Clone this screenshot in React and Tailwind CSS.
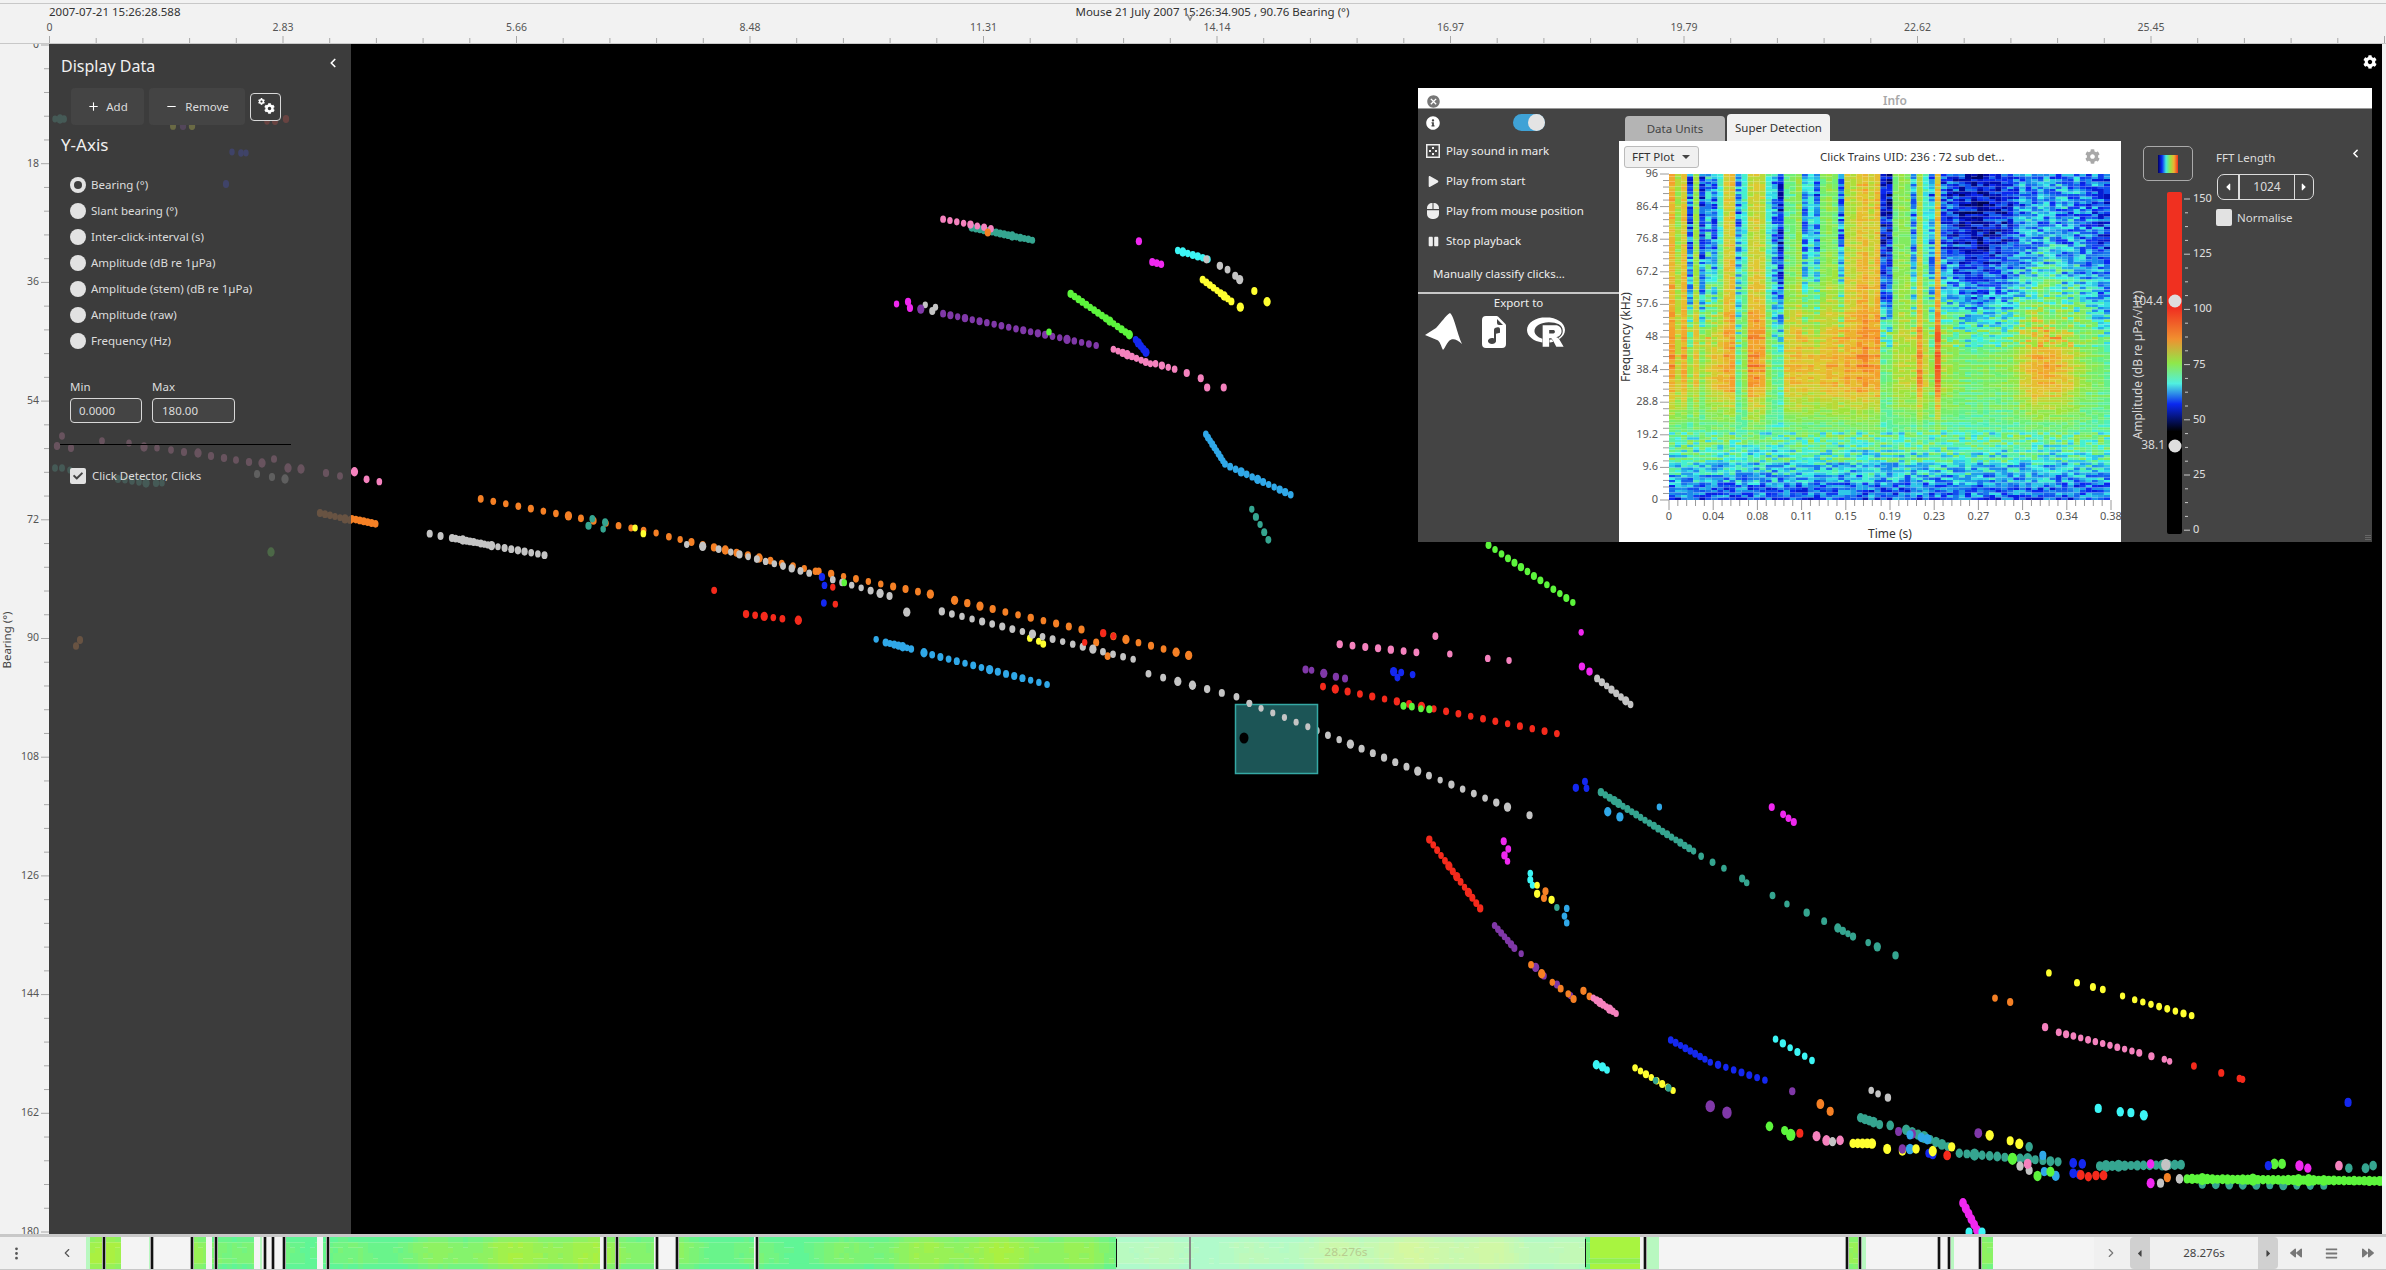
import { useMemo } from "react";
import { ChevronLeft, ChevronRight, Minus, Plus } from "lucide-react";
import { BsFileEarmarkMusicFill, BsThreeDotsVertical } from "react-icons/bs";
import { FaBackward, FaBars, FaCaretLeft, FaCaretRight, FaCheck, FaCog, FaForward, FaInfoCircle, FaPause, FaPlay } from "react-icons/fa";
import { MdCancel } from "react-icons/md";
import { SiR } from "react-icons/si";

const PINK = "#f582be";
const TEAL = "#35a590";
const ORANGE = "#f58025";
const MAGENTA = "#f028f0";
const CYAN = "#3cf5f5";
const GRAY = "#c4c4c4";
const YELLOW = "#ffff30";
const GREEN = "#5cf53c";
const PURPLE = "#8038a8";
const BLUE = "#1428f0";
const SKY = "#30a8e8";
const RED = "#f52a1c";

function rng(seed) {
    let s = seed;
    return () => {
        s = (s + 0x6d2b79f5) | 0;
        let t = Math.imul(s ^ (s >>> 15), 1 | s);
        t = (t + Math.imul(t ^ (t >>> 7), 61 | t)) ^ t;
        return ((t ^ (t >>> 14)) >>> 0) / 4294967296;
    };
}

// measured off two crops of the plot
const a = (x, y) => [350 + x / 1.568, 200 + y / 2.613];
const b = (x, y) => [1200 + x / 1.317, 540 + y / 2.34];
const line = (p, q, n) => Array.from({ length: n }, (_, i) => [p[0] + ((q[0] - p[0]) * i) / Math.max(n - 1, 1), p[1] + ((q[1] - p[1]) * i) / Math.max(n - 1, 1)]);

const tracks = [
    // behind the display data panel
    [TEAL, [[55, 119], [60, 119], [64, 119], [55, 468], [62, 468], [70, 470], [118, 479], [125, 480], [132, 481], [139, 482], [146, 483], [156, 483], [162, 483]]],
    [RED, [[267, 121], [275, 121], [286, 119]]],
    [YELLOW, [[173, 126], [192, 126]]],
    [PURPLE, [[183, 126]]],
    [BLUE, [[232, 152], [241, 153], [246, 153], [226, 184]]],
    [PINK, [[62, 436], [57, 446], [71, 448], [102, 441], [129, 443], [144, 447], [157, 448], [171, 450], [184, 452], [198, 453], [211, 456], [224, 458], [236, 460], [249, 462], [262, 463], [274, 459], [288, 468], [301, 469], [326, 473], [340, 476]]],
    [GRAY, [[257, 474], [272, 477], [285, 479]]],
    [ORANGE, [...line([320, 513], [350, 520], 7), [76, 646], [80, 640]]],
    [GREEN, [[271, 552]]],
    // upper tracks
    [TEAL, line(a(975, 72), a(1070, 105), 16)],
    [PINK, line(a(930, 50), a(1005, 75), 8)],
    [ORANGE, [a(1000, 85)]],
    [MAGENTA, [a(1237, 108), a(1258, 162), a(1265, 165), a(1272, 168), a(857, 272), a(875, 266), a(878, 282)]],
    [CYAN, line(a(1298, 132), a(1345, 155), 7)],
    [GRAY, [a(1343, 155), a(1364, 172), a(1376, 182), a(1388, 198), a(1395, 208)]],
    [YELLOW, [...line(a(1337, 208), a(1382, 265), 9), a(1396, 280), a(1418, 238), a(1438, 266)]],
    [GREEN, line(a(1130, 245), a(1222, 352), 16)],
    [BLUE, line(a(1232, 365), a(1248, 398), 5)],
    [GRAY, [a(902, 274), a(913, 290), a(918, 280)]],
    [PURPLE, [a(895, 285), ...line(a(930, 297), a(1170, 380), 22)]],
    [GREEN, [a(1096, 345)]],
    [PINK, [...line(a(1197, 390), a(1255, 428), 9), ...line(a(1263, 428), a(1293, 442), 4), a(1312, 452), a(1334, 466), a(1344, 490), a(1370, 490)]],
    [SKY, [...line(a(1342, 612), a(1372, 690), 10), ...line(a(1380, 697), a(1475, 770), 12)]],
    [TEAL, line(a(1414, 808), a(1440, 888), 5)],
    // the long diagonal
    [PINK, [a(7, 710), a(26, 730), a(46, 736)]],
    [ORANGE, line(a(3, 833), a(40, 846), 7)],
    [GRAY, [a(125, 872), a(142, 878), ...line(a(160, 883), a(222, 903), 12), ...line(a(232, 906), a(305, 928), 8)]],
    [ORANGE, [...line(a(205, 781), a(480, 870), 15), ...line(a(500, 880), a(730, 970), 14), ...line(a(735, 970), a(910, 1030), 10), ...line(a(948, 1046), a(1147, 1122), 11), ...line(a(1197, 1140), a(1315, 1190), 7), a(1170, 1156), a(1188, 1192)]],
    [TEAL, [a(380, 833), a(400, 842), a(374, 851), a(397, 860)]],
    [YELLOW, [a(447, 857), a(460, 872), a(1066, 1145), a(1080, 1153), a(1087, 1160)]],
    [GRAY, [a(528, 900), a(553, 905), a(578, 912), ...line(a(597, 920), a(720, 975), 10), ...line(a(757, 992), a(846, 1035), 7), a(873, 1077), ...line(a(928, 1075), a(1228, 1200), 20), ...line(a(1252, 1238), a(1390, 1298), 7)]],
    [BLUE, [a(740, 985), a(744, 1007), a(743, 1053)]],
    [RED, [a(757, 1012), a(761, 1056), a(571, 1020), ...line(a(621, 1082), a(678, 1094), 5), a(703, 1098), a(1152, 1156), a(1181, 1132), a(1197, 1140)]],
    [GREEN, [a(775, 1000)]],
    [SKY, [a(825, 1148), ...line(a(840, 1156), a(880, 1173), 7), ...line(a(900, 1183), a(1093, 1266), 16)]],
    // right hand side
    [GRAY, [...line(b(65, 383), b(405, 625), 24), b(434, 644)]],
    [GREEN, line(b(380, 12), b(491, 146), 14)],
    [PINK, [...line(b(184, 244), b(285, 263), 7), b(310, 225), b(329, 267), b(379, 277), b(407, 282)]],
    [MAGENTA, [b(502, 216), b(503, 296), b(513, 308)]],
    [GRAY, line(b(523, 324), b(567, 385), 8)],
    [PURPLE, [b(139, 303), b(147, 305), b(163, 312), b(179, 320), b(191, 324)]],
    [BLUE, [b(255, 308), b(265, 310), b(260, 322), b(280, 315), b(495, 580), b(507, 565), b(509, 581)]],
    [RED, line(b(162, 343), b(470, 453), 20)],
    [GREEN, [b(268, 388), b(279, 390), b(291, 395), b(302, 396)]],
    [TEAL, [...line(b(528, 590), b(650, 728), 22), ...line(b(660, 740), b(690, 768), 3), b(714, 792), b(720, 802), b(754, 832), b(773, 852), b(799, 872), b(822, 892), ...line(b(840, 908), b(860, 928), 4), b(880, 942), b(892, 952), b(916, 972)]],
    [SKY, [b(537, 636), b(553, 648), b(605, 625)]],
    [MAGENTA, [b(753, 625), b(768, 642), b(775, 651), b(782, 660), b(400, 705), b(406, 723), b(401, 738), b(405, 752)]],
    [RED, line(b(302, 701), b(369, 862), 14)],
    [CYAN, [b(435, 780), b(435, 795), b(438, 808)]],
    [YELLOW, [b(444, 808), b(444, 828), b(463, 842)]],
    [ORANGE, [b(455, 822), b(453, 838)]],
    [TEAL, [b(470, 860)]],
    [SKY, [b(483, 862), b(480, 880), b(483, 896)]],
    [PURPLE, [...line(b(388, 902), b(414, 955), 7), b(423, 968), b(442, 1000), b(453, 1020), b(470, 1040), b(488, 1066)]],
    [ORANGE, [b(436, 994), b(450, 1015), b(464, 1035), b(475, 1050), b(485, 1062), b(492, 1074), b(505, 1055), b(513, 1068)]],
    [PINK, line(b(518, 1072), b(548, 1108), 8)],
    [YELLOW, [b(1118, 1013), b(1155, 1036), b(1176, 1046), b(1189, 1052), b(1215, 1067), ...line(b(1231, 1076), b(1306, 1113), 8)]],
    [ORANGE, [b(1047, 1072), b(1067, 1081)]],
    [PINK, [b(1113, 1140), ...line(b(1131, 1152), b(1237, 1200), 12), b(1253, 1208), b(1270, 1215), b(1277, 1220)]],
    [RED, [b(1309, 1231), b(1345, 1247), b(1369, 1260), b(1373, 1262)]],
    [BLUE, [...line(b(620, 1170), b(665, 1215), 8), ...line(b(672, 1222), b(744, 1264), 8)]],
    [CYAN, [...line(b(758, 1168), b(806, 1218), 6), b(522, 1228), b(530, 1233), b(536, 1240)]],
    [YELLOW, line(b(573, 1235), b(623, 1288), 8)],
    [TEAL, [b(600, 1265), b(617, 1282)]],
    [PURPLE, [b(780, 1290), b(672, 1325), b(694, 1340)]],
    [GRAY, [b(884, 1288), b(893, 1296), b(906, 1305)]],
    [ORANGE, [b(817, 1320), b(830, 1337)]],
    [TEAL, [...line(b(870, 1352), b(887, 1362), 4), b(895, 1368), b(909, 1370), ...line(b(930, 1380), b(985, 1420), 8)]],
    [CYAN, [b(1183, 1330), b(1212, 1338), b(1226, 1340), b(1243, 1346)]],
    [BLUE, [b(1512, 1316)]],
    [GREEN, [b(750, 1372), b(770, 1382), b(778, 1392)]],
    [RED, [b(790, 1388)]],
    [PINK, [b(812, 1395), b(825, 1405), b(843, 1405)]],
    [GRAY, [b(833, 1408)]],
    [YELLOW, [...line(b(860, 1412), b(885, 1412), 5), b(905, 1425), b(925, 1430)]],
    [PURPLE, [b(920, 1384), b(938, 1390), b(925, 1425), b(1025, 1388)]],
    [SKY, [b(935, 1392), b(950, 1398), b(958, 1402), b(935, 1425)]],
    [BLUE, [b(960, 1435), b(965, 1438)]],
    [RED, [b(984, 1440)]],
    [YELLOW, [b(943, 1425), b(965, 1430), b(990, 1420), b(1040, 1393), b(1067, 1406), b(1079, 1413)]],
    [TEAL, [...line(b(1000, 1435), b(1130, 1455), 14), ...line(b(1185, 1465), b(1292, 1462), 14), b(1092, 1420)]],
    [BLUE, [b(1150, 1458), b(1162, 1460), b(1150, 1482), b(1158, 1485)]],
    [RED, [b(1160, 1486), b(1170, 1490), b(1180, 1487), b(1190, 1487)]],
    [SKY, [b(1110, 1440), b(1112, 1478), b(1127, 1488)]],
    [GREEN, [b(1103, 1488), b(1120, 1478), b(1070, 1448)]],
    [GRAY, [b(1080, 1465), b(1092, 1475), b(1272, 1462), b(1265, 1505), b(1290, 1495)]],
    [PINK, [b(1090, 1460), b(1500, 1464)]],
    [MAGENTA, [b(1252, 1505), b(1252, 1460), b(1448, 1464), b(1459, 1470), ...line([1963, 1203], [1977, 1230], 6)]],
    [ORANGE, [b(1274, 1492)]],
    [TEAL, [...line(b(1320, 1507), b(1480, 1510), 10), b(1535, 1470), b(1545, 1464), b(1513, 1470)]],
    [GREEN, [...line(b(1300, 1495), b(1560, 1500), 40), b(1415, 1460), b(1425, 1460)]],
    [BLUE, [b(1407, 1464)]],
    [CYAN, [[1969, 1232], [1982, 1232]]],
];

function ClickPlot() {
    const dots = useMemo(() => {
        const rand = rng(7);
        const out = [];
        tracks.forEach(([fill, pts]) => {
            pts.forEach(([x, y]) => {
                let k = rand() > 0.9 ? 1.3 : 0.95 + rand() * 0.2;
                if (y > 1100 && x > 1400) k *= 1.3;
                out.push({ x, y, fill, k });
            });
        });
        return out;
    }, []);

    return (
        <svg className="absolute inset-0 w-full h-full" viewBox="49 44 2333 1190">
            {dots.map((d, i) => (
                <ellipse key={i} cx={d.x} cy={d.y} rx={2.8 * d.k} ry={3.6 * d.k} fill={d.fill} />
            ))}
            <rect x="1235.5" y="704.5" width="82" height="69" fill="#1c5556" stroke="#35a8a4" strokeWidth="1.5" />
            {line(b(65, 383), b(142, 437), 6).map(([x, y], i) => (
                <ellipse key={i} cx={x} cy={y} rx="2.6" ry="3.4" fill={GRAY} />
            ))}
            <ellipse cx="1244" cy="738" rx="4.5" ry="5.5" fill="#000" />
        </svg>
    );
}

const JET = [
    [0, [0, 0, 40]],
    [0.12, [0, 10, 170]],
    [0.22, [10, 40, 240]],
    [0.33, [30, 150, 235]],
    [0.42, [60, 240, 230]],
    [0.52, [110, 240, 120]],
    [0.62, [160, 228, 60]],
    [0.72, [225, 200, 50]],
    [0.8, [245, 160, 45]],
    [0.9, [240, 90, 35]],
    [1, [240, 40, 25]],
];

function jet(v) {
    const t = Math.min(1, Math.max(0, v));
    for (let i = 1; i < JET.length; i++) {
        if (t <= JET[i][0]) {
            const f = (t - JET[i - 1][0]) / (JET[i][0] - JET[i - 1][0]);
            const c = JET[i - 1][1].map((n, j) => Math.round(n + (JET[i][1][j] - n) * f));
            return `rgb(${c.join(",")})`;
        }
    }
    return "rgb(240,40,25)";
}

const TOPS = [0.76, 0.62, 0.72, 0.26, 0.6, 0.22, 0.36, 0.28, 0.44, 0.7, 0.72, 0.34, 0.44, 0.66, 0.7, 0.66, 0.44, 0.32, 0.2, 0.5, 0.52, 0.6, 0.32, 0.4, 0.32, 0.52, 0.58, 0.54, 0.28, 0.66, 0.64, 0.72, 0.74, 0.68, 0.74, 0.16, 0.16, 0.54, 0.58, 0.56, 0.32, 0.64, 0.44, 0.32, 0.72, 0.26, 0.24, 0.2, 0.18, 0.16, 0.17, 0.16, 0.16, 0.17, 0.18, 0.2, 0.24, 0.28, 0.3, 0.32, 0.34, 0.34, 0.34, 0.32, 0.32, 0.3, 0.32, 0.32, 0.3, 0.28, 0.28, 0.26, 0.24];
const MIDS = [0.8, 0.68, 0.78, 0.6, 0.72, 0.6, 0.68, 0.73, 0.75, 0.77, 0.8, 0.5, 0.6, 0.82, 0.82, 0.79, 0.6, 0.5, 0.46, 0.72, 0.74, 0.75, 0.74, 0.74, 0.72, 0.74, 0.76, 0.76, 0.74, 0.78, 0.78, 0.8, 0.82, 0.78, 0.8, 0.52, 0.55, 0.64, 0.66, 0.66, 0.64, 0.82, 0.68, 0.6, 0.9, 0.64, 0.6, 0.58, 0.55, 0.53, 0.53, 0.55, 0.55, 0.55, 0.56, 0.56, 0.58, 0.62, 0.68, 0.73, 0.77, 0.78, 0.78, 0.77, 0.75, 0.73, 0.7, 0.64, 0.6, 0.57, 0.55, 0.53, 0.51];

function Spectrogram({ x, y, w, h }) {
    const cells = useMemo(() => {
        const rand = rng(41);
        const cols = TOPS.length;
        const rows = 130;
        const cw = w / cols;
        const ch = h / rows;
        const rowNoise = Array.from({ length: rows }, () => rand() - 0.5);
        const bins = {};
        for (let c = 0; c < cols; c++) {
            for (let r = 0; r < rows; r++) {
                const f = ((rows - r - 0.5) / rows) * 96;
                let v;
                if (f >= 38) {
                    v = TOPS[c] + (MIDS[c] - TOPS[c]) * Math.exp(-(((f - 38) / 24) ** 2));
                } else if (f > 14) {
                    const s = (38 - f) / 24;
                    v = MIDS[c] + (0.47 - MIDS[c]) * s * s * (3 - 2 * s);
                } else {
                    v = 0.47 - ((14 - f) / 14) * 0.22;
                }
                const loud = f > 45 && TOPS[c] < 0.4 ? 0.24 : f < 20 ? 0.22 : 0.08;
                v += rowNoise[r] * 0.06 + (rand() - 0.5) * loud;
                const key = jet(Math.round(v * 50) / 50);
                bins[key] = (bins[key] || "") + `M${(x + c * cw).toFixed(1)} ${(y + r * ch).toFixed(1)}h${cw.toFixed(1)}v${ch.toFixed(1)}h-${cw.toFixed(1)}z`;
            }
        }
        return Object.entries(bins);
    }, [x, y, w, h]);

    return (
        <g>
            {cells.map(([fill, d]) => (
                <path key={fill} d={d} fill={fill} />
            ))}
        </g>
    );
}

function FftPlot() {
    const yLabels = ["96", "86.4", "76.8", "67.2", "57.6", "48", "38.4", "28.8", "19.2", "9.6", "0"];
    const xLabels = ["0", "0.04", "0.08", "0.11", "0.15", "0.19", "0.23", "0.27", "0.3", "0.34", "0.38"];
    const ticks = [];
    for (let i = 0; i <= 50; i++) {
        const major = i % 5 === 0;
        const yy = 174 + i * 6.52;
        ticks.push(<line key={"y" + i} x1={major ? 1660 : 1663} x2="1669" y1={yy} y2={yy} stroke="#9a9a9a" />);
        const xx = 1669 + i * 8.84;
        ticks.push(<line key={"x" + i} x1={xx} x2={xx} y1="500" y2={major ? 510 : 506} stroke="#9a9a9a" />);
    }
    return (
        <svg className="w-[502px] h-[374px] block" viewBox="1619 168 502 374">
            <Spectrogram x={1669} y={174} w={441} h={326} />
            {ticks}
            <g fill="#555" fontSize="11">
                {yLabels.map((t, i) => (
                    <text key={t} x="1658" y={174 + i * 32.6} textAnchor="end" dominantBaseline="middle">{t}</text>
                ))}
                {xLabels.map((t, i) => (
                    <text key={t} x={1669 + i * 44.2} y="517" textAnchor="middle" dominantBaseline="middle">{t}</text>
                ))}
            </g>
            <g fill="#333" fontSize="12">
                <text x="1890" y="535" textAnchor="middle" dominantBaseline="middle">Time (s)</text>
                <text x="0" y="0" textAnchor="middle" dominantBaseline="middle" transform="translate(1627 337) rotate(-90)">Frequency (kHz)</text>
            </g>
        </svg>
    );
}

function ColourBar() {
    const ticks = [];
    for (let i = 0; i <= 24; i++) {
        const yy = 199 + i * 13.8;
        const major = i % 4 === 0;
        ticks.push(<line key={i} x1={major ? 2184 : 2185} x2={major ? 2190 : 2188} y1={yy} y2={yy} stroke="#c8c8c8" />);
    }
    return (
        <svg className="w-[95px] h-[357px] block" viewBox="2121 185 95 357">
            <defs>
                <linearGradient id="bar" x1="0" y1="0" x2="0" y2="1">
                    <stop offset="0.34" stopColor="#f03020" />
                    <stop offset="0.43" stopColor="#f09030" />
                    <stop offset="0.5" stopColor="#8fe84a" />
                    <stop offset="0.56" stopColor="#50f0e0" />
                    <stop offset="0.62" stopColor="#0a28f0" />
                    <stop offset="0.7" stopColor="#000" />
                </linearGradient>
            </defs>
            <rect x="2167" y="192" width="15" height="342" rx="2" fill="url(#bar)" />
            {ticks}
            <g fill="#e0e0e0" fontSize="11">
                {["150", "125", "100", "75", "50", "25", "0"].map((t, i) => (
                    <text key={t} x="2193" y={199 + i * 55.2} dominantBaseline="middle">{t}</text>
                ))}
            </g>
            <g fill="#d8d8d8" fontSize="12">
                <text x="2163" y="302" textAnchor="end" dominantBaseline="middle">104.4</text>
                <text x="2165" y="446" textAnchor="end" dominantBaseline="middle">38.1</text>
                <text x="0" y="0" textAnchor="middle" dominantBaseline="middle" transform="translate(2139 365) rotate(-90)">Amplitude (dB re µPa/√Hz)</text>
            </g>
            <circle cx="2175" cy="301" r="6.5" fill="#dedede" />
            <circle cx="2175" cy="446" r="6.5" fill="#dedede" />
        </svg>
    );
}

function TopAxis() {
    const labels = ["0", "2.83", "5.66", "8.48", "11.31", "14.14", "16.97", "19.79", "22.62", "25.45"];
    const ticks = [];
    for (let i = 0; i <= 50; i++) {
        const xx = 49.5 + i * 46.7;
        ticks.push(<line key={i} x1={xx} x2={xx} y1={i % 5 === 0 ? 36 : 38} y2="44" stroke="#a8a8a8" />);
    }
    return (
        <svg className="w-full h-[24px] block" viewBox="0 20 2386 24">
            {ticks}
            {labels.map((t, i) => (
                <text key={t} x={49.5 + i * 233.5} y="28" textAnchor="middle" dominantBaseline="middle" fill="#555" fontSize="10.5">{t}</text>
            ))}
        </svg>
    );
}

function LeftAxis() {
    const ticks = [];
    for (let i = 0; i <= 50; i++) {
        const yy = 45 + i * 23.74;
        const major = i % 5 === 0;
        ticks.push(<line key={i} x1={major ? 41 : 44} x2="49" y1={yy} y2={yy} stroke="#a8a8a8" />);
        if (major) {
            ticks.push(<text key={"t" + i} x="39" y={yy} textAnchor="end" dominantBaseline="middle" fill="#555" fontSize="10.5">{i * 3.6}</text>);
        }
    }
    return (
        <svg className="w-[49px] h-[1190px] block shrink-0" viewBox="0 44 49 1190">
            {ticks}
            <text x="0" y="0" textAnchor="middle" dominantBaseline="middle" fill="#444" fontSize="11.5" transform="translate(8 640) rotate(-90)">Bearing (°)</text>
        </svg>
    );
}

const STRIP = [
    [86, 90, "p"], [90, 121, "g"], [149, 152, "p"], [153, 154, "p"], [193, 206, "g"], [212, 254, "g"], [260, 262, "p"], [285, 317, "g"], [323, 600, "g"],
    [606, 654, "g"], [679, 754, "g"], [759, 1590, "g"], [1590, 1640, "b"], [1646, 1659, "p"], [1848, 1858, "g"], [1862, 1866, "p"], [1950, 1954, "p"], [1982, 1993, "g"],
];
const STRIP_LINES = [103, 151, 191, 215, 264, 272, 283, 327, 604, 616, 656, 676, 756, 1644, 1846, 1859, 1938, 1948, 1979];

function Overview() {
    const cells = useMemo(() => {
        const rand = rng(13);
        const bins = {};
        const w = 5;
        const h = 6;
        STRIP.forEach(([x0, x1, kind]) => {
            for (let x = x0; x < x1; x += w) {
                const wave = 0.5 + 0.35 * Math.sin(x / 70) + 0.15 * Math.sin(x / 13);
                for (let r = 0; r < 6; r++) {
                    const edge = r === 0 || r === 5 ? -0.25 : 0;
                    let v = wave + edge + (rand() - 0.5) * 0.12;
                    v = Math.max(0, Math.min(1, v));
                    const k = Math.round(v * 8) / 8;
                    let fill = `rgb(${Math.round(96 + 74 * k)},${Math.round(245 - 5 * k)},${Math.round(150 - 85 * k)})`;
                    if (kind === "p") fill = "#b8f8c0";
                    if (kind === "b") fill = r === 4 ? "#90f050" : "#a8f440";
                    bins[fill] = (bins[fill] || "") + `M${x} ${r * h}h${Math.min(w, x1 - x)}v${h}h-${Math.min(w, x1 - x)}z`;
                }
            }
        });
        return Object.entries(bins);
    }, []);

    return (
        <svg className="w-[2008px] h-[32px] block" viewBox="86 0 2008 36" preserveAspectRatio="none">
            <rect x="86" y="0" width="2008" height="36" fill="#f4f4f4" />
            {cells.map(([fill, d]) => (
                <path key={fill} d={d} fill={fill} />
            ))}
            <rect x="1116" y="0" width="469" height="36" fill="#fff" fillOpacity="0.5" />
            <rect x="1116" y="2" width="1" height="32" fill="#111" />
            <rect x="1585" y="2" width="1" height="32" fill="#111" />
            <rect x="1189" y="0" width="2" height="36" fill="#888" />
            {STRIP_LINES.map((x) => (
                <g key={x}>
                    <rect x={x - 1} y="0" width="4" height="36" fill="#aaa" />
                    <rect x={x} y="0" width="2" height="36" fill="#111" />
                </g>
            ))}
            <text x="1346" y="18" textAnchor="middle" dominantBaseline="middle" fill="#b8cc90" fontSize="12">28.276s</text>
        </svg>
    );
}

function Radio({ label, selected }) {
    return (
        <div className="h-[26px] flex items-center gap-[5px]">
            <span className="w-4 h-4 rounded-full bg-[#e2e2e2] flex items-center justify-center">
                {selected && <span className="w-[8px] h-[8px] rounded-full bg-[#3c3c3c]"></span>}
            </span>
            <span className="text-[11.5px] text-[#dcdcdc]">{label}</span>
        </div>
    );
}

function DisplayPanel() {
    const options = ["Bearing (°)", "Slant bearing (°)", "Inter-click-interval (s)", "Amplitude (dB re 1µPa)", "Amplitude (stem) (dB re 1µPa)", "Amplitude (raw)", "Frequency (Hz)"];
    return (
        <div className="absolute left-0 top-0 bottom-0 w-[302px] bg-[#494949]/[0.82] text-white">
            <div className="h-[44px] pl-[12px] pr-[11px] flex items-center justify-between">
                <span className="text-[16px] text-[#f0f0f0]">Display Data</span>
                <ChevronLeft size={14} strokeWidth={3} className="mb-[6px]" />
            </div>
            <div className="h-[37px] ml-[22px] flex items-center">
                <button className="w-[73px] h-full rounded bg-[#444444] flex items-center justify-center gap-[6px] text-[11.5px] text-[#dcdcdc]">
                    <Plus size={13} strokeWidth={2} className="text-white" /> Add
                </button>
                <button className="w-[96px] h-full ml-[5px] rounded bg-[#444444] flex items-center justify-center gap-[7px] text-[11.5px] text-[#dcdcdc]">
                    <Minus size={13} strokeWidth={2} className="text-white" /> Remove
                </button>
                <button className="relative w-[31px] h-[28px] ml-[5px] rounded border border-[#d8d8d8] bg-[#3c3c3c]">
                    <FaCog size={7} className="absolute left-[7px] top-[4px]" />
                    <FaCog size={11} className="absolute left-[13px] top-[9px]" />
                </button>
            </div>
            <div className="h-[38px] pl-[12px] pt-[2px] flex items-center text-[17px] text-[#f0f0f0]">Y-Axis</div>
            <div className="mt-[9px] ml-[21px]">
                {options.map((o, i) => (
                    <Radio key={o} label={o} selected={i === 0} />
                ))}
            </div>
            <div className="mt-[24px] ml-[21px] flex gap-[10px] text-[11.5px] text-[#dcdcdc]">
                <div className="w-[72px]">
                    <div className="h-[18px] leading-[18px] mb-[2px]">Min</div>
                    <div className="h-[25px] border border-[#d8d8d8] rounded-[4px] bg-[#444444] pl-[8px] leading-[23px]">0.0000</div>
                </div>
                <div className="w-[83px]">
                    <div className="h-[18px] leading-[18px] mb-[2px]">Max</div>
                    <div className="h-[25px] border border-[#d8d8d8] rounded-[4px] bg-[#444444] pl-[9px] leading-[23px]">180.00</div>
                </div>
            </div>
            <div className="mt-[21px] ml-[11px] w-[231px] h-px bg-black"></div>
            <div className="mt-[22px] ml-[21px] flex items-center gap-[6px]">
                <span className="w-4 h-4 rounded-[2px] bg-[#e2e2e2] flex items-center justify-center text-[#444]">
                    <FaCheck size={10} />
                </span>
                <span className="text-[11.5px] text-[#dcdcdc]">Click Detector, Clicks</span>
            </div>
        </div>
    );
}

function MarkIcon() {
    return (
        <svg width="14" height="14" viewBox="0 0 14 14">
            <rect x="0.75" y="0.75" width="12.5" height="12.5" fill="none" stroke="#eee" strokeWidth="1.5" />
            <rect x="6" y="3" width="2" height="2" fill="#eee" />
            <rect x="6" y="9" width="2" height="2" fill="#eee" />
            <rect x="3" y="6" width="2" height="2" fill="#eee" />
            <rect x="9" y="6" width="2" height="2" fill="#eee" />
        </svg>
    );
}

function MouseIcon() {
    return (
        <svg width="12" height="16" viewBox="0 0 12 16" fill="#eee">
            <path d="M0 6V5a5 5 0 0 1 5-5h.5v6zM6.500 6V0H7a5 5 0 0 1 5 5v1zM0 7.200h12V11a5 5 0 0 1-5 5H5a5 5 0 0 1-5-5z" />
        </svg>
    );
}

function MatlabIcon() {
    return (
        <svg width="38" height="38" viewBox="0 0 38 38" fill="#fff">
            <path d="M0 22 L11 15 C16 10 21 2 25 0 C29 3 32 20 37 31 C32 26 27 25 24 28 C21 31 20 35 18 37 C16 33 15 28 12 27 C8 25 4 24 0 22Z" />
        </svg>
    );
}

function InfoMenu() {
    const rows = [
        [<MarkIcon />, "Play sound in mark"],
        [<FaPlay size={11} />, "Play from start"],
        [<MouseIcon />, "Play from mouse position"],
        [<FaPause size={11} />, "Stop playback"],
    ];
    return (
        <div className="w-[201px] shrink-0 text-[11.5px] text-[#eeeeee]">
            <div className="h-[27px] flex items-center pl-[8px] relative">
                <FaInfoCircle size={14} className="text-white" />
                <div className="ml-[73px] w-[32px] h-[17px] rounded-full bg-[#3fa2d6] flex justify-end items-center">
                    <span className="w-[17px] h-[17px] rounded-full bg-[#e4e4e4]"></span>
                </div>
            </div>
            {rows.map(([icon, text]) => (
                <div key={text} className="h-[30px] flex items-center">
                    <span className="w-[28px] flex justify-center pl-[2px] shrink-0">{icon}</span>
                    <span>{text}</span>
                </div>
            ))}
            <div className="h-[36px] flex items-center pl-[15px]">Manually classify clicks...</div>
            <div className="h-[2px] bg-[#c8c8c8]"></div>
            <div className="h-[18px] flex items-center justify-center">Export to</div>
            <div className="mt-[1px] flex items-center">
                <span className="ml-[7px]"><MatlabIcon /></span>
                <BsFileEarmarkMusicFill size={32} className="ml-[15px] text-white" />
                <SiR size={38} className="ml-[17px] text-white" />
            </div>
        </div>
    );
}

function InfoWindow() {
    return (
        <div className="absolute left-[1369px] top-[44px] w-[954px] h-[454px] flex flex-col bg-[#444444]">
            <div className="h-[21px] shrink-0 pt-[6px] bg-white border-b border-[#999] relative flex items-center justify-center text-[12px] font-semibold text-[#a8a8a8]">
                <MdCancel size={15} className="absolute left-[8px] top-[6px] text-[#777]" />
                Info
            </div>
            <div className="flex flex-1 relative">
                <InfoMenu />
                <div className="w-[502px] shrink-0 flex flex-col">
                    <div className="h-[32px] pl-[6px] flex items-end text-[11.5px]">
                        <div className="w-[100px] h-[25px] rounded-t-[4px] bg-[#b4b4b4] text-[#444] flex items-center justify-center">Data Units</div>
                        <div className="w-[103px] h-[27px] ml-[2px] rounded-t-[4px] bg-[#f2f2f2] text-[#333] flex items-center justify-center">Super Detection</div>
                    </div>
                    <div className="flex-1 bg-white">
                        <div className="h-[27px] relative flex items-start">
                            <div className="mt-[5px] ml-[5px] w-[75px] h-[22px] rounded-[3px] border border-[#bbb] bg-[#f0f0f0] text-[11.5px] text-[#333] flex items-center pl-[7px] gap-[8px]">
                                FFT Plot
                                <span className="w-0 h-0 border-l-[4px] border-r-[4px] border-t-[4px] border-l-transparent border-r-transparent border-t-[#444]"></span>
                            </div>
                            <span className="ml-[121px] mt-[7px] whitespace-nowrap text-[11.5px] leading-[18px] text-[#333]">Click Trains UID: 236 : 72 sub det...</span>
                            <FaCog size={15} className="absolute right-[21px] top-[8px] text-[#a8a8a8]" />
                        </div>
                        <FftPlot />
                    </div>
                </div>
                <div className="flex-1 flex relative">
                    <div className="w-[95px] shrink-0">
                        <div className="ml-[22px] mt-[37px] w-[50px] h-[35px] rounded-[5px] border border-[#aaa] flex items-center justify-center">
                            <span className="w-[20px] h-[18px] bg-[linear-gradient(to_right,#000060,#0a28f0,#40e8e0,#8fe84a,#f0b030,#f03020)]"></span>
                        </div>
                        <div className="mt-[4px]">
                            <ColourBar />
                        </div>
                    </div>
                    <div className="pt-[40px] text-[11.5px] text-[#dcdcdc]">
                        <div className="h-[18px] leading-[18px]">FFT Length</div>
                        <div className="mt-[7px] ml-px w-[97px] h-[26px] rounded-[7px] border border-[#dcdcdc] flex items-center">
                            <div className="w-[22px] h-full border-r-2 border-[#dcdcdc] flex items-center justify-center text-white"><FaCaretLeft size={12} /></div>
                            <div className="w-[54px] h-full flex items-center justify-center text-[12px]">1024</div>
                            <div className="flex-1 h-full border-l border-[#dcdcdc] flex items-center justify-center text-white"><FaCaretRight size={12} /></div>
                        </div>
                        <div className="mt-[9px] flex items-center gap-[5px]">
                            <span className="w-4 h-[17px] rounded-[2px] bg-[#e2e2e2]"></span>
                            Normalise
                        </div>
                    </div>
                    <ChevronLeft size={13} strokeWidth={3} className="absolute right-[10px] top-[38px] text-white" />
                    <div className="absolute right-[1px] bottom-[1px] w-[6px] h-[6px] bg-[repeating-linear-gradient(to_bottom,#666_0px,#666_1px,transparent_1px,transparent_2px)]"></div>
                </div>
            </div>
        </div>
    );
}

export default function App() {
    return (
        <div className="w-[2386px] h-[1270px] flex flex-col overflow-hidden bg-[#f2f2f2] font-['Noto_Sans',sans-serif]">
            <div className="relative h-[44px] shrink-0 pt-[3px]">
                <div className="h-[17px] border-t border-[#c8c8c8] flex items-center text-[11.5px] text-[#333] whitespace-nowrap">
                    <span className="ml-[49px]">2007-07-21 15:26:28.588</span>
                    <span className="ml-[895px]">Mouse 21 July 2007 15:26:34.905 , 90.76 Bearing (°)</span>
                </div>
                <TopAxis />
                <svg className="absolute left-[1186px] top-[13px]" width="8" height="8" viewBox="0 0 8 8">
                    <path d="M1 1 L4 7 L7 1" fill="none" stroke="#888" strokeWidth="1.500" />
                </svg>
                <div className="absolute left-0 right-0 bottom-0 h-[1px] bg-[#c8c8c8]"></div>
            </div>
            <div className="flex h-[1190px] shrink-0">
                <LeftAxis />
                <div className="relative w-[2333px] shrink-0 bg-black overflow-hidden">
                    <ClickPlot />
                    <DisplayPanel />
                    <InfoWindow />
                    <FaCog size={14} className="absolute right-[5px] top-[11px] text-white" />
                </div>
            </div>
            <div className="h-[36px] shrink-0 border-t-[3px] border-b border-[#c8c8c8] flex bg-[#f0f0f0]">
                <div className="w-[86px] shrink-0 flex items-center text-[#555]">
                    <BsThreeDotsVertical size={15} className="ml-[9px]" />
                    <ChevronLeft size={14} className="ml-[36px]" />
                </div>
                <Overview />
                <div className="flex-1 flex items-center text-[#777]">
                    <ChevronRight size={14} className="ml-[10px]" />
                    <div className="ml-[12px] w-[148px] h-full rounded-[4px] bg-[#f0f0f0] border-x-[20px] border-[#d0d0d0] flex items-center justify-center text-[11.5px] text-[#444] relative">
                        <FaCaretLeft size={11} className="absolute left-[-16px]" />
                        28.276s
                        <FaCaretRight size={11} className="absolute right-[-16px]" />
                    </div>
                    <FaBackward size={12} className="ml-[12px]" />
                    <FaBars size={13} className="ml-[23px]" />
                    <FaForward size={12} className="ml-[24px]" />
                </div>
            </div>
        </div>
    );
}
